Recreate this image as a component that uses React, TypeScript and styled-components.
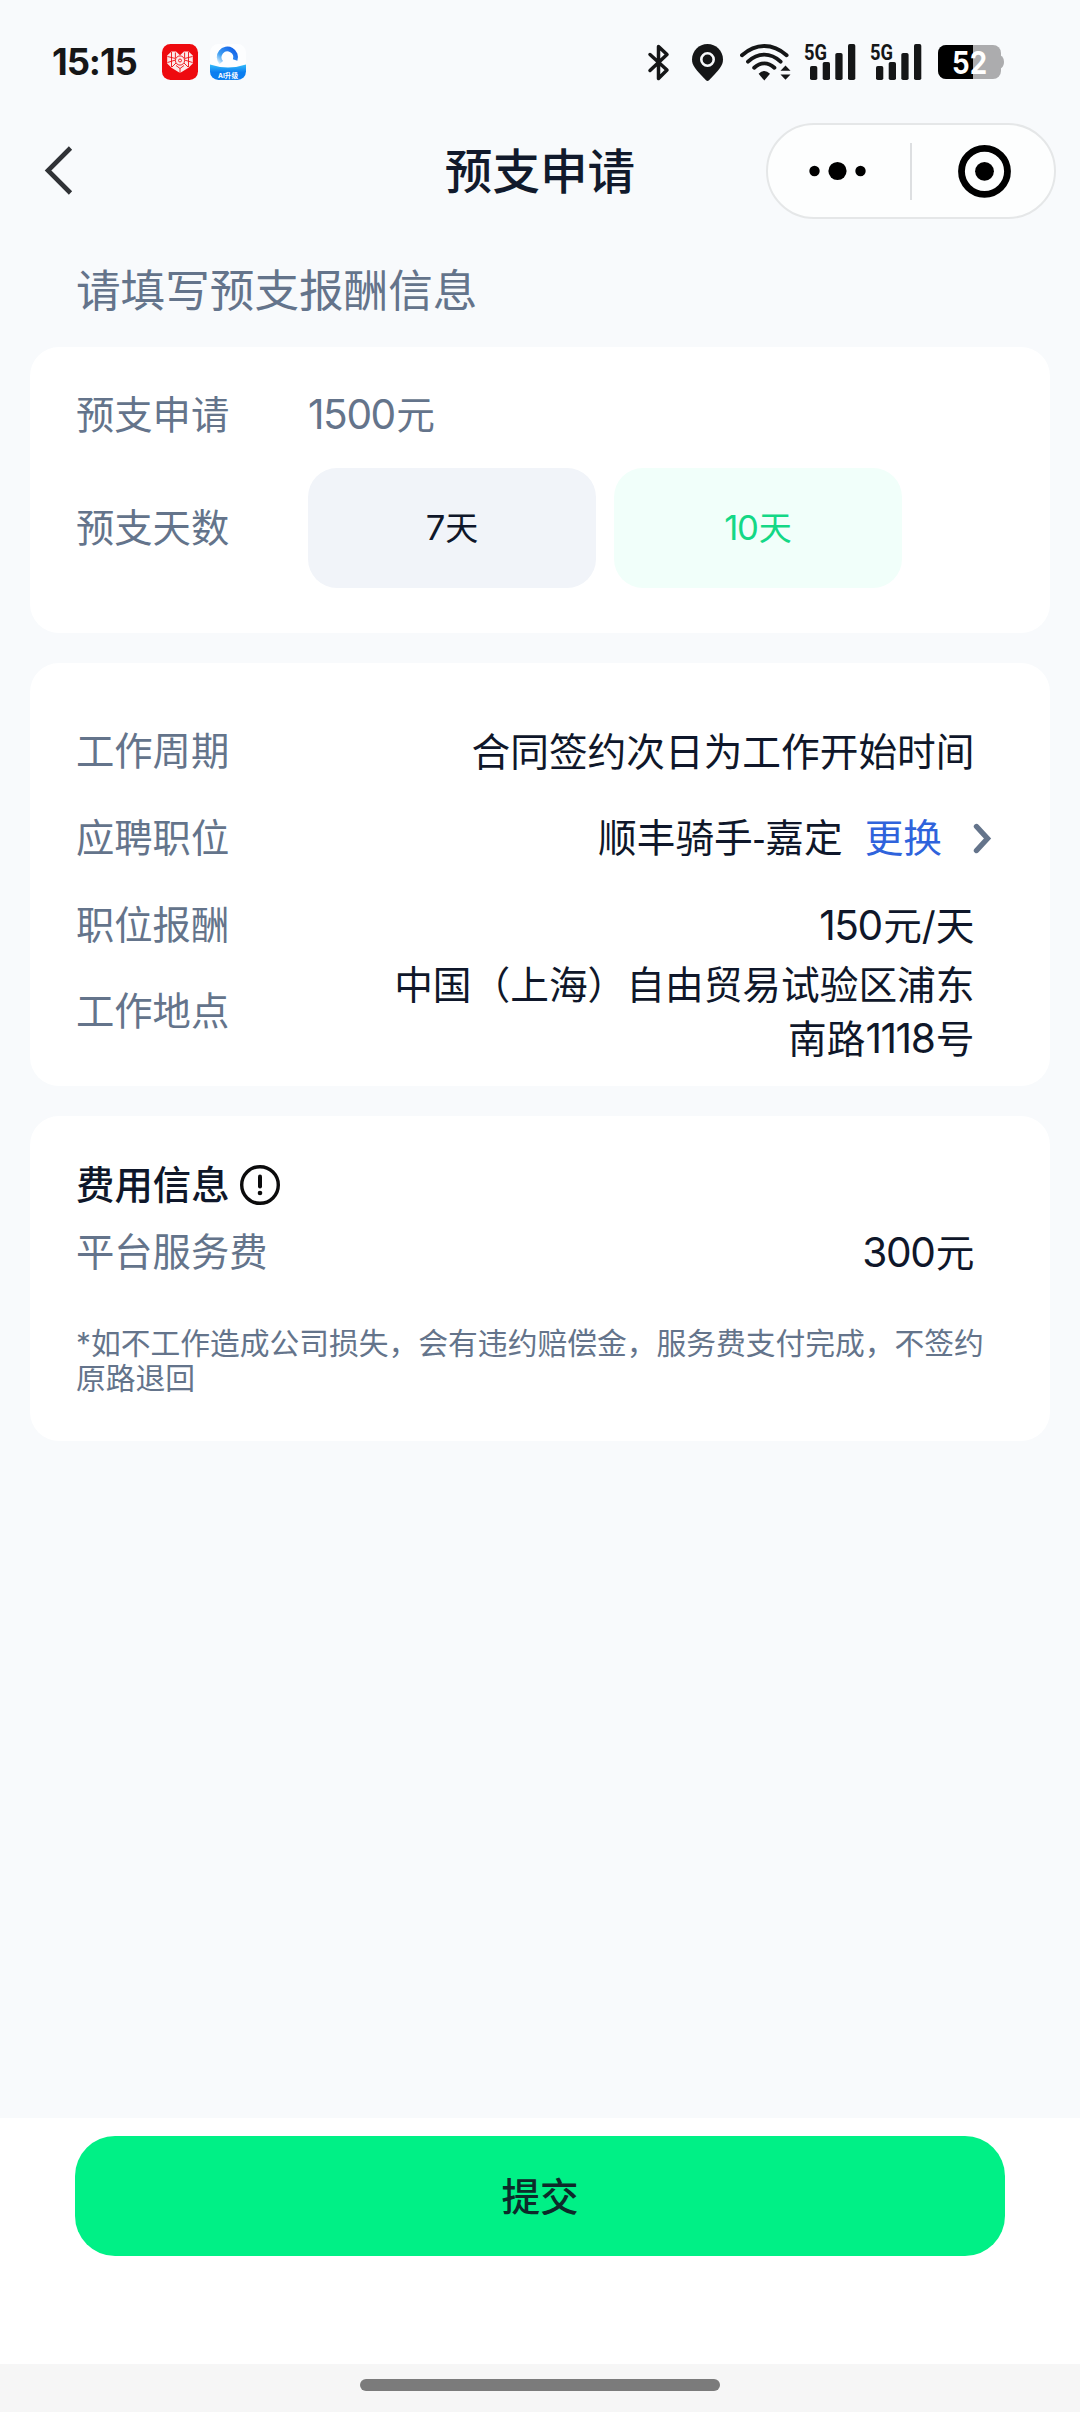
import React from "react";
import styled, { createGlobalStyle } from "styled-components";

const GlobalStyle = createGlobalStyle`
  * { box-sizing: border-box; }
  body {
    margin: 0;
    background: #f8fafc;
    font-family: Inter, "Noto Sans CJK SC", sans-serif;
    color: #0f172a;
  }
  button { font: inherit; border: 0; padding: 0; background: none; color: inherit; }
  svg { display: block; flex: none; overflow: visible; }
`;

const Screen = styled.div`
  display: flex;
  flex-direction: column;
  width: 1080px;
  height: 2412px;
  background: #f8fafc;
`;

const StatusBar = styled.div`
  display: flex;
  align-items: center;
  height: 123px;
  padding: 1px 76px 0 52px;
`;

const Clock = styled.span`
  width: 110px;
  font-size: 36.5px;
  font-weight: 650;
  line-height: 40px;
  letter-spacing: -1.1px;
  color: #151617;
`;

const StatusApps = styled.div`
  display: flex;
  gap: 12px;
`;

const StatusIcons = styled.div`
  display: flex;
  align-items: center;
  margin-left: auto;
`;

const StatusGap = styled.span<{ $w: number }>`
  width: ${(p) => p.$w}px;
`;

const Header = styled.header`
  display: grid;
  grid-template-columns: 1fr auto 1fr;
  align-items: center;
  height: 96px;
  padding: 0 24px;
`;

const BackButton = styled.button`
  justify-self: start;
  margin-bottom: 2px;
  width: 72px;
  padding-left: 16px;
`;

const Title = styled.h1`
  margin: 0;
  padding-top: 1px;
  font-size: 47.6px;
  font-weight: 500;
  line-height: 60px;
  color: #111a2c;
`;

const Capsule = styled.div`
  justify-self: end;
  display: grid;
  grid-template-columns: 142px 2px 1fr;
  align-items: center;
  width: 290px;
  height: 96px;
  border: 2px solid #e5e7e8;
  border-radius: 48px;
  background: #fdfefe;
`;

const CapsuleDivider = styled.span`
  height: 57px;
  background: #dddfe1;
`;

const CapsuleButton = styled.button`
  display: flex;
  justify-content: center;
`;

const Hint = styled.p`
  margin: 42px 0 26px;
  padding-left: 76px;
  font-size: 44.6px;
  line-height: 60px;
  color: #64748b;
`;

const Cards = styled.main`
  flex: 1;
  display: flex;
  flex-direction: column;
  gap: 30px;
  padding: 0 30px;
`;

const Card = styled.section<{ $pad: string }>`
  padding: ${(p) => p.$pad};
  border-radius: 29px;
  background: #fff;
  font-size: 38.7px;
  line-height: 54px;
`;

const FormRow = styled.div<{ $h: number }>`
  display: grid;
  grid-template-columns: 232px 1fr;
  align-items: center;
  height: ${(p) => p.$h}px;
`;

const Label = styled.span`
  font-size: 38.3px;
  color: #64748b;
  white-space: nowrap;
`;

const Amount = styled.span`
  color: #64748b;
`;

const Num = styled.span`
  margin-right: 0.035em;
  font-size: 1.05em;
  letter-spacing: -0.035em;
`;

const Hyphen = styled.span`
  font-family: "Noto Sans", sans-serif;
`;

const Chips = styled.div`
  display: flex;
  gap: 18px;
`;

const Chip = styled.button<{ $active?: boolean }>`
  width: 288px;
  height: 120px;
  padding-bottom: 1px;
  border-radius: 29px;
  font-size: 33px;
  background: ${(p) => (p.$active ? "#f1fffa" : "#f1f4f9")};
  color: ${(p) => (p.$active ? "#14d886" : "#0f172a")};
`;

const InfoRow = styled.div<{ $h: number }>`
  display: flex;
  align-items: center;
  justify-content: space-between;
  height: ${(p) => p.$h}px;
`;

const Value = styled.span`
  max-width: 584px;
  margin-right: 29.5px;
  padding-top: 2px;
  text-align: right;
`;

const JobValue = styled.span`
  display: flex;
  align-items: center;
  margin-right: 12px;
`;

const ChangeLink = styled.a`
  margin: 0 30px 0 22px;
  color: #2f63dc;
`;

const SectionTitle = styled.h2`
  display: flex;
  align-items: center;
  gap: 9px;
  margin: 0;
  height: 66px;
  font-size: 38.4px;
  font-weight: 500;
`;

const Note = styled.p`
  margin: 40px -6px 0 0;
  font-size: 29.78px;
  line-height: 35px;
  color: #64748b;
`;

const Footer = styled.footer`
  height: 246px;
  padding: 18px 75px 0;
  background: #fff;
`;

const Submit = styled.button`
  width: 100%;
  height: 120px;
  padding-bottom: 5px;
  border-radius: 40px;
  background: #00f086;
  font-size: 38.6px;
  font-weight: 500;
  color: #0d2a2a;
`;

const NavBar = styled.div`
  display: flex;
  justify-content: center;
  height: 48px;
  padding-top: 15px;
  background: #f6f6f6;
`;

const NavHandle = styled.span`
  width: 360px;
  height: 12px;
  border-radius: 6px;
  background: #7b7b7b;
`;

const SvgText = styled.text`
  font-family: Inter, "Noto Sans CJK SC", sans-serif;
  font-weight: 700;
`;

const NarrowText = styled(SvgText)`
  font-family: Roboto, sans-serif;
`;

function HeartApp() {
  return (
    <svg width="36" height="36" viewBox="0 0 36 36">
      <rect width="36" height="36" rx="8.5" fill="#ee0a0f" />
      <path
        d="M5.2 11.5 L9.5 7.4 L14 7.6 L18 11.2 L22 7.6 L26.5 7.4 L30.8 11.5 V19.5 L26.5 23.8 L18 29 L9.5 23.8 L5.2 19.5 Z"
        fill="#fbe9e9"
      />
      <g stroke="#ee0a0f" strokeWidth="0.9" fill="none">
        <path d="M9.5 8v15M13.4 8.5v5.5M26.5 8v15M22.6 8.5v5.5M5.5 12.5l8 2M30.5 12.5l-8 2M5.5 18.5l8-2.5M30.5 18.5l-8-2.5M10 23l4-4M26 23l-4-4M14 21.5l4 3 4-3M18 24.5V29" />
        <circle cx="18" cy="16.5" r="4.6" />
        <circle cx="18" cy="16.5" r="1.5" />
      </g>
    </svg>
  );
}

function AssistantApp() {
  return (
    <svg width="36" height="36" viewBox="0 0 36 36">
      <defs>
        <linearGradient id="arc" gradientUnits="userSpaceOnUse" x1="9" y1="20" x2="22" y2="5">
          <stop offset="0" stopColor="#e3f5ff" />
          <stop offset="0.4" stopColor="#3f9ff2" />
          <stop offset="1" stopColor="#1668ea" />
        </linearGradient>
        <linearGradient id="bowl" x1="0" y1="0" x2="0" y2="1">
          <stop offset="0" stopColor="#35bdfa" />
          <stop offset="0.5" stopColor="#0b7ef0" />
        </linearGradient>
        <clipPath id="tile">
          <rect width="36" height="36" rx="8.5" />
        </clipPath>
      </defs>
      <g clipPath="url(#tile)">
        <rect width="36" height="36" fill="#fdfeff" />
        <path d="M11.2 18.6A8.2 8.2 0 1 1 25.1 16" fill="none" stroke="url(#arc)" strokeWidth="4.8" />
        <path d="M0 20.500Q18 26.500 36 20.500V36H0Z" fill="url(#bowl)" />
        <SvgText x="18" y="34" fontSize="6.6" textAnchor="middle" fill="#fff">
          AI升级
        </SvgText>
      </g>
    </svg>
  );
}

function BluetoothIcon() {
  return (
    <svg width="22" height="37" viewBox="0 0 22 37">
      <path
        d="M2 10.5 L19 26 L10.5 34.5 V2.5 L19 10.5 L2 26.5"
        fill="none"
        stroke="#151617"
        strokeWidth="3.5"
        strokeLinejoin="round"
        strokeLinecap="round"
      />
    </svg>
  );
}

function PinIcon() {
  return (
    <svg width="31" height="37" viewBox="0 0 31 37">
      <path
        d="M15.5 0C24 0 31 6.8 31 15.5C31 21.5 27.5 25.5 17 36.3Q15.5 37.6 14 36.3C3.5 25.5 0 21.5 0 15.5C0 6.8 7 0 15.5 0Z"
        fill="#151617"
      />
      <circle cx="15.5" cy="15.5" r="6.2" fill="none" stroke="#f8fafc" strokeWidth="2.6" />
    </svg>
  );
}

function WifiIcon() {
  return (
    <svg width="51" height="37" viewBox="0 0 51 37">
      <g fill="none" stroke="#151617" strokeWidth="3.9" strokeLinecap="round">
        <path d="M2 11.2Q12.5 2 24.3 2T46.6 11.2" />
        <path d="M8 17.6Q15.5 10.6 24.3 10.6T40.6 17.6" />
        <path d="M14.2 23.8Q19 19.4 24.3 19.4T34.4 23.8" />
      </g>
      <path d="M24.300 36.5L18.600 29.800Q24.300 24 30 29.800Z" fill="#151617" />
      <path d="M40.5 26.8L45.5 21.5L50.5 26.8ZM40.5 30.5L45.5 35.8L50.5 30.5Z" fill="#151617" />
    </svg>
  );
}

function SignalIcon() {
  return (
    <svg width="52" height="38" viewBox="0 0 52 38">
      <NarrowText x="0" y="16.5" fontSize="21.5" textLength="23" lengthAdjust="spacingAndGlyphs" fill="#151617">
        5G
      </NarrowText>
      <g fill="#151617">
        <rect x="6" y="23" width="7.3" height="14" rx="1.8" />
        <rect x="18.7" y="19" width="7.3" height="18" rx="1.8" />
        <rect x="31.3" y="10" width="7.3" height="27" rx="1.8" />
        <rect x="44" y="1" width="7.3" height="36" rx="1.8" />
      </g>
    </svg>
  );
}

function BatteryIcon() {
  return (
    <svg width="66" height="34" viewBox="0 0 66 34">
      <defs>
        <clipPath id="cell">
          <rect width="63" height="34" rx="8" />
        </clipPath>
      </defs>
      <path d="M62 10Q66 12 66 17T62 24Z" fill="#acacae" />
      <g clipPath="url(#cell)">
        <rect width="63" height="34" fill="#acacae" />
        <rect width="35" height="34" fill="#000" />
      </g>
      <SvgText x="14" y="28.6" fontSize="31" textLength="35" lengthAdjust="spacingAndGlyphs" fill="#fff">
        52
      </SvgText>
    </svg>
  );
}

export default function App() {
  return (
    <Screen>
      <GlobalStyle />
      <StatusBar>
        <Clock>15:15</Clock>
        <StatusApps>
          <HeartApp />
          <AssistantApp />
        </StatusApps>
        <StatusIcons>
          <BluetoothIcon />
          <StatusGap $w={22} />
          <PinIcon />
          <StatusGap $w={17} />
          <WifiIcon />
          <StatusGap $w={13} />
          <SignalIcon />
          <StatusGap $w={14} />
          <SignalIcon />
          <StatusGap $w={16} />
          <BatteryIcon />
        </StatusIcons>
      </StatusBar>

      <Header>
        <BackButton aria-label="返回">
          <svg width="36" height="50" viewBox="0 0 36 50">
            <path d="M30.5 3L8 25.5L30.5 48" fill="none" stroke="#303236" strokeWidth="4.6" />
          </svg>
        </BackButton>
        <Title>预支申请</Title>
        <Capsule>
          <CapsuleButton aria-label="更多">
            <svg width="60" height="20" viewBox="0 0 60 20">
              <circle cx="5.5" cy="10" r="5.2" />
              <circle cx="28.5" cy="10" r="9.1" />
              <circle cx="51.5" cy="10" r="5.2" />
            </svg>
          </CapsuleButton>
          <CapsuleDivider />
          <CapsuleButton aria-label="关闭">
            <svg width="54" height="54" viewBox="0 0 54 54">
              <circle cx="28.5" cy="27.3" r="23" fill="none" stroke="#000" strokeWidth="6.8" />
              <circle cx="28.5" cy="27.3" r="9.4" />
            </svg>
          </CapsuleButton>
        </Capsule>
      </Header>

      <Hint>请填写预支报酬信息</Hint>

      <Cards>
        <Card $pad="14px 46px 45px">
          <FormRow $h={107}>
            <Label>预支申请</Label>
            <Amount>
              <Num>1500</Num>元
            </Amount>
          </FormRow>
          <FormRow $h={120}>
            <Label>预支天数</Label>
            <Chips>
              <Chip>
                <Num>7</Num>天
              </Chip>
              <Chip $active>
                <Num>10</Num>天
              </Chip>
            </Chips>
          </FormRow>
        </Card>

        <Card $pad="44px 46px 32px">
          <InfoRow $h={87}>
            <Label>工作周期</Label>
            <Value>合同签约次日为工作开始时间</Value>
          </InfoRow>
          <InfoRow $h={87}>
            <Label>应聘职位</Label>
            <JobValue>
              <span>
                顺丰骑手<Hyphen>-</Hyphen>嘉定
              </span>
              <ChangeLink>更换</ChangeLink>
              <svg width="20" height="32" viewBox="0 0 20 32">
                <path
                  d="M4.5 4.5L15.5 16.500L4.5 28.500"
                  fill="none"
                  stroke="#64748b"
                  strokeWidth="5.400"
                  strokeLinecap="round"
                />
              </svg>
            </JobValue>
          </InfoRow>
          <InfoRow $h={87}>
            <Label>职位报酬</Label>
            <Value>
              <Num>150</Num>元/天
            </Value>
          </InfoRow>
          <InfoRow $h={86}>
            <Label>工作地点</Label>
            <Value>
              中国（上海）自由贸易试验区浦东南路<Num>1118</Num>号
            </Value>
          </InfoRow>
        </Card>

        <Card $pad="36px 46px 45px">
          <SectionTitle>
            费用信息
            <svg width="42" height="42" viewBox="0 0 42 42">
              <circle cx="21" cy="21" r="18.3" fill="none" stroke="#0b0b0c" strokeWidth="3.4" />
              <path d="M21 12.5V22.5" stroke="#0b0b0c" strokeWidth="4" strokeLinecap="round" />
              <circle cx="21" cy="29" r="2.3" fill="#0b0b0c" />
            </svg>
          </SectionTitle>
          <InfoRow $h={68}>
            <Label>平台服务费</Label>
            <Value>
              <Num>300</Num>元
            </Value>
          </InfoRow>
          <Note>*如不工作造成公司损失，会有违约赔偿金，服务费支付完成，不签约原路退回</Note>
        </Card>
      </Cards>

      <Footer>
        <Submit>提交</Submit>
      </Footer>
      <NavBar>
        <NavHandle />
      </NavBar>
    </Screen>
  );
}
